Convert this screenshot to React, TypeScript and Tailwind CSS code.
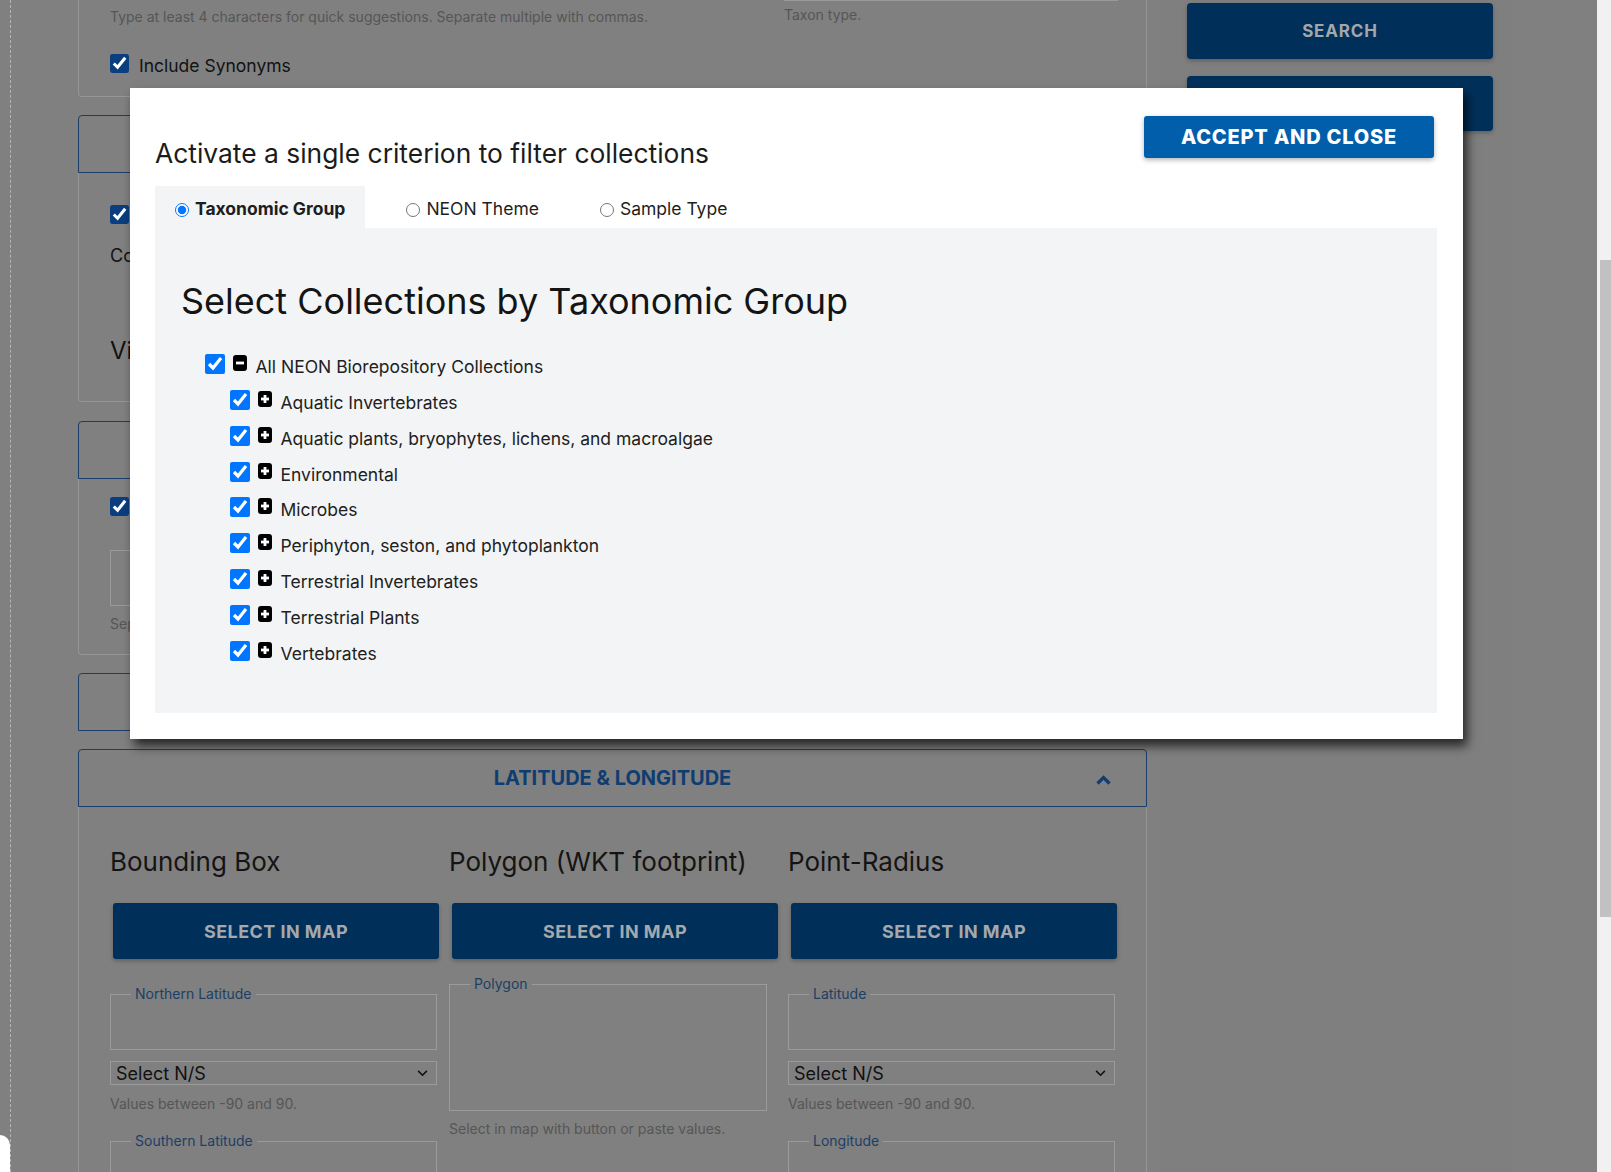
import React from "react";

const collections = [
  "Aquatic Invertebrates",
  "Aquatic plants, bryophytes, lichens, and macroalgae",
  "Environmental",
  "Microbes",
  "Periphyton, seston, and phytoplankton",
  "Terrestrial Invertebrates",
  "Terrestrial Plants",
  "Vertebrates",
];

function SquareIcon({ plus }: { plus?: boolean }) {
  return (
    <svg viewBox="0 0 14 16" className="w-[14px] h-[16px] shrink-0">
      <rect x="0" y="0" width="14" height="16" rx="3" fill="#000" />
      <rect x="3" y="6.6" width="8" height="2.8" fill="#fff" />
      {plus && <rect x="5.6" y="4" width="2.8" height="8" fill="#fff" />}
    </svg>
  );
}

function TreeRow({ label, child }: { label: string; child?: boolean }) {
  return (
    <label className={child ? "flex items-start h-[35.85px] pl-[49px]" : "flex items-start h-[35.85px] pl-[24px]"}>
      <input type="checkbox" defaultChecked className="m-0 w-[20px] h-[20px] shrink-0" />
      <span className="ml-[8px] mt-[1px]">
        <SquareIcon plus={child} />
      </span>
      <span className="ml-[8.5px] mt-[4px] text-[17.5px] leading-[18px] text-[#212121]">{label}</span>
    </label>
  );
}

function Chevron({ up }: { up?: boolean }) {
  return (
    <svg viewBox="0 0 15 10" className="w-[15px] h-[10px] mt-[4px]">
      <polyline
        points={up ? "1.5,8.5 7.5,2.5 13.5,8.5" : "1.5,1.5 7.5,7.5 13.5,1.5"}
        fill="none"
        stroke="#123e6e"
        strokeWidth="3.2"
      />
    </svg>
  );
}

function SectionHeader({ title, up }: { title: string; up?: boolean }) {
  return (
    <div className="h-[58px] border border-[#1b3e68] rounded-t-[4px] flex items-center px-[35px]">
      <span className="w-[15px]" />
      <span className="flex-1 text-center text-[20px] font-bold text-[#0f3d70]">{title}</span>
      <Chevron up={up} />
    </div>
  );
}

function Field({ label, className }: { label: string; className: string }) {
  return (
    <fieldset className={`border border-[#9b9b9b] px-[20px] ${className}`}>
      <legend className="px-[4px] text-[14px] leading-[18px] text-[#1d3f66]">{label}</legend>
    </fieldset>
  );
}

function SelectNS() {
  return (
    <div className="mt-[11px] w-[327px] h-[24px] border border-[#9b9b9b] flex items-center justify-between pl-[5px] pr-[8px] text-[18px] text-[#111]">
      <span>Select N/S</span>
      <svg viewBox="0 0 12 8" className="w-[11px] h-[7px]">
        <polyline points="1,1 6,6 11,1" fill="none" stroke="#111" strokeWidth="1.8" />
      </svg>
    </div>
  );
}

function MapButton() {
  return (
    <button className="mt-[25px] ml-[3px] w-[326px] h-[56px] rounded-[3px] bg-[#00305a] text-[18px] font-bold tracking-wide text-[#a5a9ad] shadow-[0_2px_4px_rgba(0,0,0,0.25)]">
      SELECT IN MAP
    </button>
  );
}

const helper = "text-[14px] leading-[18px] text-[#565656]";

export default function App() {
  return (
    <div className="relative h-[1172px] w-full overflow-hidden flex bg-[#808080] font-['Inter',sans-serif]">
      {/* left gutter */}
      <div className="w-[78px] shrink-0">
        <div className="ml-[10px] h-full border-l border-dashed border-[#b5b5b5]" />
      </div>

      {/* main form column */}
      <div className="w-[1069px] shrink-0 flex flex-col">
        <div className="h-[97px] shrink-0 border-x border-b border-[#959595] rounded-b-[4px] flex pl-[31px] pr-[28px]">
          <div className="flex-1">
            <p className={`pt-[8px] ${helper}`}>
              Type at least 4 characters for quick suggestions. Separate multiple with commas.
            </p>
            <label className="mt-[28px] flex items-start gap-[10px] text-[17.5px] text-[#121212]">
              <input type="checkbox" defaultChecked className="m-0 w-[19px] h-[19px] accent-[#0b3e7e]" />
              <span className="mt-[2px] leading-[19px]">Include Synonyms</span>
            </label>
          </div>
          <div className="w-[334px]">
            <div className="h-px bg-[#9a9a9a]" />
            <p className={`mt-[5px] ${helper}`}>Taxon type.</p>
          </div>
        </div>

        <div className="mt-[18px] shrink-0">
          <SectionHeader title="COLLECTIONS" />
          <div className="h-[229px] border-x border-b border-[#959595] rounded-b-[4px] pl-[31px] pt-[32px]">
            <input type="checkbox" defaultChecked className="m-0 w-[19px] h-[19px] accent-[#0b3e7e]" />
            <p className="mt-[12px] text-[18px] text-[#121212]">Collections: All NEON Biorepository Collections</p>
            <p className="mt-[64px] text-[24px] text-[#121212]">View collections list</p>
          </div>
        </div>

        <div className="mt-[19px] shrink-0">
          <SectionHeader title="SAMPLE PROPERTIES" />
          <div className="h-[176px] border-x border-b border-[#959595] rounded-b-[4px] pl-[31px] pr-[28px] pt-[18px]">
            <input type="checkbox" defaultChecked className="m-0 w-[19px] h-[19px] accent-[#0b3e7e]" />
            <div className="mt-[28px] h-[56px] w-[500px] border border-[#9b9b9b]" />
            <p className={`mt-[9px] ${helper}`}>Separate multiple with commas.</p>
          </div>
        </div>

        <div className="mt-[18px] shrink-0">
          <SectionHeader title="LOCALITY" />
        </div>

        <div className="mt-[18px] flex-1 flex flex-col">
          <SectionHeader title="LATITUDE & LONGITUDE" up />
          <div className="flex-1 border-x border-[#959595] grid grid-cols-[330px_330px_330px] gap-x-[9px] pl-[31px] pr-[28px] pt-[39px] content-start">
            <div className="flex flex-col items-start">
              <h3 className="text-[26px] leading-[32px] text-[#141414]">Bounding Box</h3>
              <MapButton />
              <Field label="Northern Latitude" className="mt-[26px] w-[327px] h-[65px]" />
              <SelectNS />
              <p className={`mt-[10px] ${helper}`}>Values between -90 and 90.</p>
              <Field label="Southern Latitude" className="mt-[19px] w-[327px] h-[65px]" />
            </div>
            <div className="flex flex-col items-start">
              <h3 className="text-[26px] leading-[32px] text-[#141414]">Polygon (WKT footprint)</h3>
              <MapButton />
              <Field label="Polygon" className="mt-[16px] w-[318px] h-[136px]" />
              <p className={`mt-[9px] ${helper}`}>Select in map with button or paste values.</p>
            </div>
            <div className="flex flex-col items-start">
              <h3 className="text-[26px] leading-[32px] text-[#141414]">Point-Radius</h3>
              <MapButton />
              <Field label="Latitude" className="mt-[26px] w-[327px] h-[65px]" />
              <SelectNS />
              <p className={`mt-[10px] ${helper}`}>Values between -90 and 90.</p>
              <Field label="Longitude" className="mt-[19px] w-[327px] h-[65px]" />
            </div>
          </div>
        </div>
      </div>

      {/* sidebar */}
      <div className="ml-[12px] w-[354px] shrink-0 bg-[#7e7f7e] pt-[3px] pl-[28px] pr-[20px] flex flex-col gap-[17px]">
        <button className="h-[56px] pt-[2px] rounded-[4px] bg-[#00305a] text-[17px] font-bold tracking-wider text-[#a3a7ab] shadow-[0_2px_4px_rgba(0,0,0,0.25)]">
          SEARCH
        </button>
        <button className="h-[55px] rounded-[4px] bg-[#00305a] text-[17px] font-bold tracking-wider text-[#a3a7ab] shadow-[0_2px_4px_rgba(0,0,0,0.25)]">
          RESET
        </button>
      </div>
      <div className="flex-1" />

      {/* scrollbar */}
      <div className="w-[14px] shrink-0 bg-[#f1f1f1]">
        <div className="mt-[260px] ml-[3px] w-[11px] h-[657px] bg-[#c1c1c1]" />
      </div>

      <div className="absolute left-0 top-[1135px] w-[10px] h-[45px] rounded-tr-[10px] bg-white" />

      {/* modal */}
      <div className="absolute left-[130px] top-[88px] w-[1333px] bg-white pt-[28px] pl-[25px] pr-[26px] pb-[26px] shadow-[4px_7px_10px_rgba(0,0,0,0.7)]">
        <div className="flex justify-between items-start">
          <h1 className="pt-[21px] text-[26.4px] leading-[32px] text-[#1b1b1b]">
            Activate a single criterion to filter collections
          </h1>
          <button className="mr-[3px] w-[290px] h-[42px] rounded-[3px] bg-[#005eab] text-[20px] font-extrabold tracking-[0.04em] text-white shadow-[0_2px_5px_rgba(0,0,0,0.3)]">
            ACCEPT AND CLOSE
          </button>
        </div>

        <div className="mt-[17px] flex gap-[21px] text-[17.5px] text-[#1e1e1e]">
          <label className="h-[42px] pt-[5px] px-[20px] flex items-center gap-[6px] bg-[#f3f4f6] font-bold">
            <input type="radio" name="criterion" defaultChecked className="m-0 w-[14px] h-[14px]" />
            Taxonomic Group
          </label>
          <label className="h-[42px] pt-[5px] px-[20px] flex items-center gap-[6px]">
            <input type="radio" name="criterion" className="m-0 w-[14px] h-[14px]" />
            NEON Theme
          </label>
          <label className="h-[42px] pt-[5px] px-[20px] flex items-center gap-[6px]">
            <input type="radio" name="criterion" className="m-0 w-[14px] h-[14px]" />
            Sample Type
          </label>
        </div>

        <div className="bg-[#f3f4f6] px-[26px] pt-[51px] pb-[36px]">
          <h2 className="text-[36px] leading-[44px] text-[#141414]">Select Collections by Taxonomic Group</h2>
          <div className="mt-[31px]">
            <TreeRow label="All NEON Biorepository Collections" />
            {collections.map((c) => (
              <TreeRow key={c} label={c} child />
            ))}
          </div>
        </div>
      </div>
    </div>
  );
}
